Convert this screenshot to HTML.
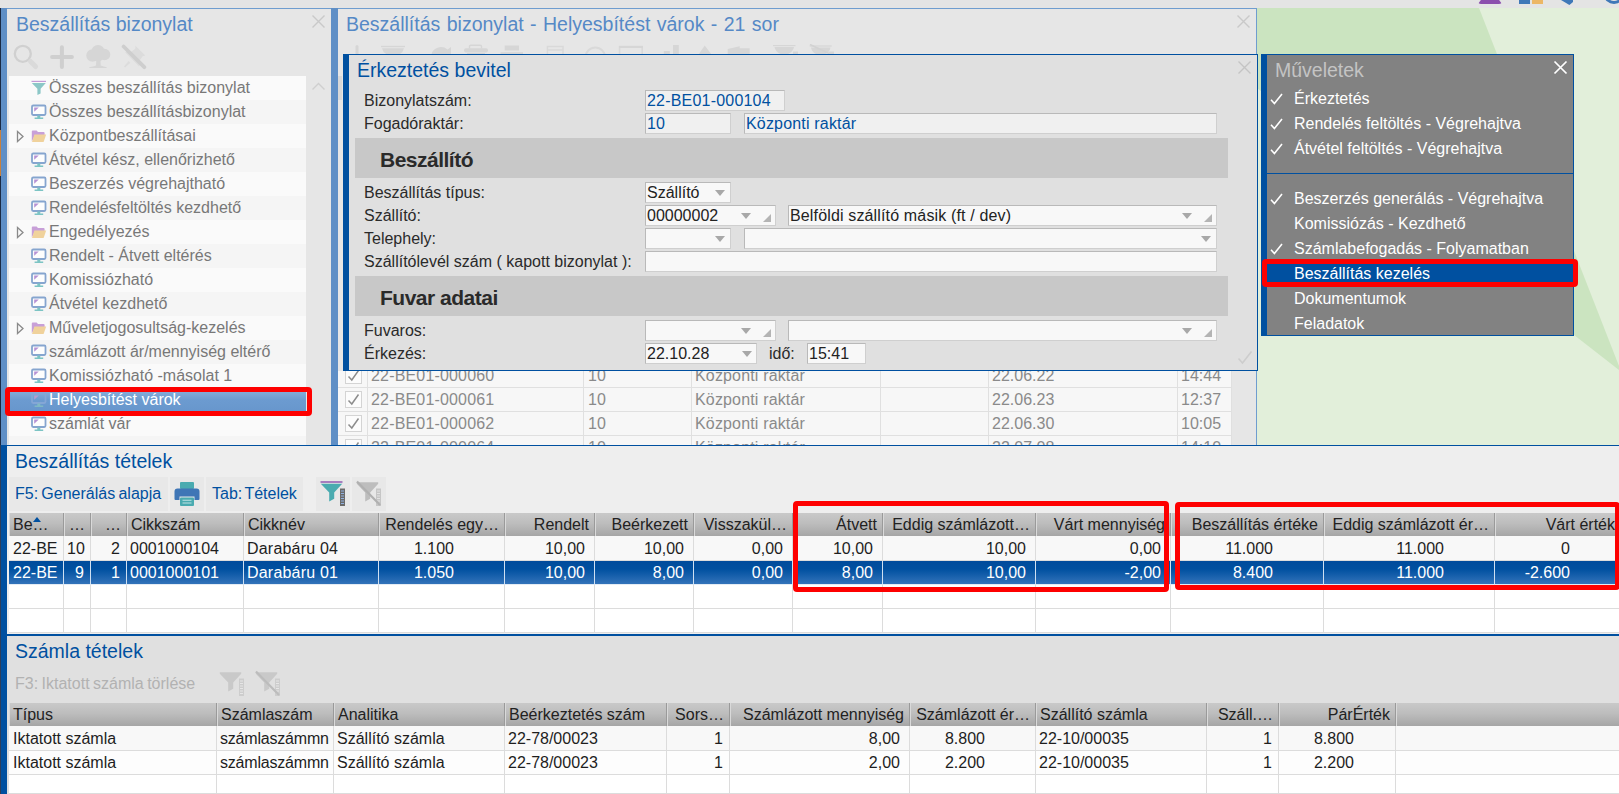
<!DOCTYPE html>
<html lang="hu"><head><meta charset="utf-8"><title>Beszállítás bizonylat</title>
<style>
*{box-sizing:border-box;margin:0;padding:0}
html,body{width:1619px;height:794px;overflow:hidden;background:#e4e4e4;font-family:"Liberation Sans",Arial,sans-serif;font-size:16px;color:#222}
.a{position:absolute}
.t{position:absolute;white-space:nowrap;line-height:20px;height:20px}
.h1{position:absolute;white-space:nowrap;font-size:19.5px;line-height:24px;color:#0050a0}
.fld{position:absolute;height:21px;border:1px solid #b9b9b9;border-bottom-color:#cfcfcf;border-right-color:#cfcfcf;background:#f8f8f8;line-height:19px;padding-left:1px;white-space:nowrap;overflow:hidden}
.fld.ro{background:#f0f0f0;color:#0050a0}
.sec{position:absolute;left:355px;width:873px;height:40px;background:#c8c8c8;font-weight:bold;font-size:21px;letter-spacing:-0.5px;line-height:43px;padding-left:25px;color:#2a2a2a}
.dd{position:absolute;width:0;height:0;border-left:5px solid transparent;border-right:5px solid transparent;border-top:6px solid #a8a8a8}
.rs{position:absolute;width:0;height:0;border-left:8px solid transparent;border-bottom:8px solid #b4b4b4}
.th{position:absolute;top:0;height:23px;line-height:23px;white-space:nowrap;overflow:hidden;color:#222;border-left:1px solid #d9d9d9;border-right:1px solid #9a9a9a;padding:0 5px 0 3px;background:linear-gradient(#c9c9c9,#bdbdbd 45%,#a6a6a6)}
.td{position:absolute;height:24px;line-height:23px;white-space:nowrap;overflow:hidden;padding:0 9px 0 3px;border-right:1px solid #dcdcdc;border-bottom:1px solid #dcdcdc}
.r{text-align:right}
.c{text-align:center}
.mi{position:absolute;left:1294px;color:#fff;white-space:nowrap;line-height:20px}
.ck{position:absolute;left:1270px;width:13px;height:12px}
</style></head><body>

<div class="a" style="left:0;top:0;width:1619px;height:8px;background:#e4e4e4"></div>
<div class="a" style="left:1478px;top:0;width:24px;height:4px;background:#8c4fae;border-radius:0 0 3px 3px;clip-path:polygon(12% 0,88% 0,100% 100%,0 100%)"></div>
<div class="a" style="left:1519px;top:0;width:11px;height:4px;background:#3f78b8"></div>
<div class="a" style="left:1532px;top:0;width:11px;height:4px;background:#ecb766"></div>
<div class="a" style="left:1561px;top:0;width:12px;height:5px;background:#3f78b8;clip-path:polygon(0 0,100% 0,100% 40%,70% 100%)"></div>
<div class="a" style="left:1604px;top:-14px;width:20px;height:18px;border:3px solid #3f78b8;border-radius:50%"></div>
<div class="a" style="left:1257px;top:8px;width:362px;height:437px;background:#e2efda"></div>
<svg class="a" style="left:1257px;top:8px" width="362" height="437" viewBox="1257 8 362 437"><polygon points="1257,8 1479,8 1619,366 1619,370 1257,88" fill="#cbe4c0"/></svg>
<div class="a" style="left:0;top:8px;width:331px;height:437px;background:#e6e6e6;border-top:1px solid #6f9dcf"></div>
<div class="a" style="left:0;top:8px;width:7px;height:437px;background:#5f8fc6"></div>
<div class="a" style="left:0;top:8px;width:1px;height:437px;background:#1a2a44"></div>
<div class="a" style="left:0;top:130px;width:1px;height:46px;background:#c8803c"></div>
<div class="h1" style="left:16px;top:12px;color:#5589c6">Beszállítás bizonylat</div>
<svg class="a" style="left:311px;top:14px" width="15" height="15" viewBox="0 0 15 15"><path d="M1.5 1.5 L13.5 13.5 M13.5 1.5 L1.5 13.5" stroke="#c9c9c9" stroke-width="1.4" fill="none"/></svg>
<svg class="a" style="left:12px;top:44px" width="140" height="27" viewBox="0 0 140 27" fill="none">
<circle cx="10.8" cy="9.8" r="8" stroke="#d0d0d0" stroke-width="2.3"/><path d="M18.500 17.500 L23.600 22.600" stroke="#dadada" stroke-width="5" stroke-linecap="round"/>
<path d="M49.900 3.200 V22.900 M40.100 13 H59.900" stroke="#cfcfcf" stroke-width="4" stroke-linecap="round"/>
<g fill="#d6d6d6"><circle cx="80.500" cy="11.500" r="6.200"/><circle cx="86" cy="7.800" r="6.800"/><circle cx="92.500" cy="10.500" r="5.800"/><circle cx="86" cy="12" r="5.500"/><path d="M84.400 15 h4 l0.300 6.500 q3 1.200 6 1.800 v0.800 h-17.500 v-0.800 q4 -0.500 6.800 -1.800z"/></g>
<g fill="#dcdcdc"><path d="M123.500 1.800 l9.800 9.800 -2.600 0.600 -3.200 4.400 1 4 -1.600 1.600 -13.600 -13.600 1.600 -1.600 4 1 4.400 -3.200z"/><path d="M116.600 17 l1.800 1.800 -5.400 4.600 -1 -1z"/></g>
<path d="M111.600 2.500 L132.300 23.200" stroke="#cecece" stroke-width="3.800" stroke-linecap="round"/>
</svg>
<div class="a" style="left:9px;top:76px;width:297px;height:369px;background:#fafafa"></div>
<div class="a" style="left:9px;top:76px;width:297px;height:24px;background:#fafafa"></div>
<svg class="a" style="left:31px;top:80px" width="16" height="16" viewBox="0 0 16 16"><path d="M0.5 1.4 h14.5" stroke="#c39ad6" stroke-width="1.2"/><path d="M0.8 3 h14 l-5.2 5.8 v4.6 l-3.2 1.6 v-6.2z" fill="#8cc7c7"/></svg>
<div class="t" style="left:49px;top:78px;color:#787878">Összes beszállítás bizonylat</div>
<div class="a" style="left:9px;top:100px;width:297px;height:24px;background:#f5f5f5"></div>
<svg class="a" style="left:31px;top:104px" width="16" height="16" viewBox="0 0 16 16"><rect x="1" y="1.5" width="13.5" height="9.5" rx="1.2" fill="#fdfdfd" stroke="#86a5cf" stroke-width="1.8"/><path d="M3.2 3.6 h4.6 l-4.6 4.2z" fill="#b692d4"/><path d="M6.3 11.5 h3 v2 h-3z M3.6 13.4 h8.6 v1.6 h-8.6z" fill="#7cc4c4"/></svg>
<div class="t" style="left:49px;top:102px;color:#787878">Összes beszállításbizonylat</div>
<div class="a" style="left:9px;top:124px;width:297px;height:24px;background:#fafafa"></div>
<svg class="a" style="left:16px;top:130px" width="9" height="13" viewBox="0 0 9 13"><path d="M1.5 1.5 L7 6.5 L1.5 11.5z" fill="none" stroke="#8a8a8a" stroke-width="1.3"/></svg>
<svg class="a" style="left:31px;top:128px" width="16" height="16" viewBox="0 0 16 16"><path d="M0.8 13.5 v-10 q0 -1 1 -1 h3.8 l1.4 1.6 h5.6 q1 0 1 1 v2 h-9.5 z" fill="#c8a0d8"/><path d="M3.4 6.6 h11.8 l-2.6 7.4 h-11.6z" fill="#f0d29c"/></svg>
<div class="t" style="left:49px;top:126px;color:#787878">Központbeszállításai</div>
<div class="a" style="left:9px;top:148px;width:297px;height:24px;background:#f5f5f5"></div>
<svg class="a" style="left:31px;top:152px" width="16" height="16" viewBox="0 0 16 16"><rect x="1" y="1.5" width="13.5" height="9.5" rx="1.2" fill="#fdfdfd" stroke="#86a5cf" stroke-width="1.8"/><path d="M3.2 3.6 h4.6 l-4.6 4.2z" fill="#b692d4"/><path d="M6.3 11.5 h3 v2 h-3z M3.6 13.4 h8.6 v1.6 h-8.6z" fill="#7cc4c4"/></svg>
<div class="t" style="left:49px;top:150px;color:#787878">Átvétel kész, ellenőrizhető</div>
<div class="a" style="left:9px;top:172px;width:297px;height:24px;background:#fafafa"></div>
<svg class="a" style="left:31px;top:176px" width="16" height="16" viewBox="0 0 16 16"><rect x="1" y="1.5" width="13.5" height="9.5" rx="1.2" fill="#fdfdfd" stroke="#86a5cf" stroke-width="1.8"/><path d="M3.2 3.6 h4.6 l-4.6 4.2z" fill="#b692d4"/><path d="M6.3 11.5 h3 v2 h-3z M3.6 13.4 h8.6 v1.6 h-8.6z" fill="#7cc4c4"/></svg>
<div class="t" style="left:49px;top:174px;color:#787878">Beszerzés végrehajtható</div>
<div class="a" style="left:9px;top:196px;width:297px;height:24px;background:#f5f5f5"></div>
<svg class="a" style="left:31px;top:200px" width="16" height="16" viewBox="0 0 16 16"><rect x="1" y="1.5" width="13.5" height="9.5" rx="1.2" fill="#fdfdfd" stroke="#86a5cf" stroke-width="1.8"/><path d="M3.2 3.6 h4.6 l-4.6 4.2z" fill="#b692d4"/><path d="M6.3 11.5 h3 v2 h-3z M3.6 13.4 h8.6 v1.6 h-8.6z" fill="#7cc4c4"/></svg>
<div class="t" style="left:49px;top:198px;color:#787878">Rendelésfeltöltés kezdhető</div>
<div class="a" style="left:9px;top:220px;width:297px;height:24px;background:#fafafa"></div>
<svg class="a" style="left:16px;top:226px" width="9" height="13" viewBox="0 0 9 13"><path d="M1.5 1.5 L7 6.5 L1.5 11.5z" fill="none" stroke="#8a8a8a" stroke-width="1.3"/></svg>
<svg class="a" style="left:31px;top:224px" width="16" height="16" viewBox="0 0 16 16"><path d="M0.8 13.5 v-10 q0 -1 1 -1 h3.8 l1.4 1.6 h5.6 q1 0 1 1 v2 h-9.5 z" fill="#c8a0d8"/><path d="M3.4 6.6 h11.8 l-2.6 7.4 h-11.6z" fill="#f0d29c"/></svg>
<div class="t" style="left:49px;top:222px;color:#787878">Engedélyezés</div>
<div class="a" style="left:9px;top:244px;width:297px;height:24px;background:#f5f5f5"></div>
<svg class="a" style="left:31px;top:248px" width="16" height="16" viewBox="0 0 16 16"><rect x="1" y="1.5" width="13.5" height="9.5" rx="1.2" fill="#fdfdfd" stroke="#86a5cf" stroke-width="1.8"/><path d="M3.2 3.6 h4.6 l-4.6 4.2z" fill="#b692d4"/><path d="M6.3 11.5 h3 v2 h-3z M3.6 13.4 h8.6 v1.6 h-8.6z" fill="#7cc4c4"/></svg>
<div class="t" style="left:49px;top:246px;color:#787878">Rendelt - Átvett eltérés</div>
<div class="a" style="left:9px;top:268px;width:297px;height:24px;background:#fafafa"></div>
<svg class="a" style="left:31px;top:272px" width="16" height="16" viewBox="0 0 16 16"><rect x="1" y="1.5" width="13.5" height="9.5" rx="1.2" fill="#fdfdfd" stroke="#86a5cf" stroke-width="1.8"/><path d="M3.2 3.6 h4.6 l-4.6 4.2z" fill="#b692d4"/><path d="M6.3 11.5 h3 v2 h-3z M3.6 13.4 h8.6 v1.6 h-8.6z" fill="#7cc4c4"/></svg>
<div class="t" style="left:49px;top:270px;color:#787878">Komissiózható</div>
<div class="a" style="left:9px;top:292px;width:297px;height:24px;background:#f5f5f5"></div>
<svg class="a" style="left:31px;top:296px" width="16" height="16" viewBox="0 0 16 16"><rect x="1" y="1.5" width="13.5" height="9.5" rx="1.2" fill="#fdfdfd" stroke="#86a5cf" stroke-width="1.8"/><path d="M3.2 3.6 h4.6 l-4.6 4.2z" fill="#b692d4"/><path d="M6.3 11.5 h3 v2 h-3z M3.6 13.4 h8.6 v1.6 h-8.6z" fill="#7cc4c4"/></svg>
<div class="t" style="left:49px;top:294px;color:#787878">Átvétel kezdhető</div>
<div class="a" style="left:9px;top:316px;width:297px;height:24px;background:#fafafa"></div>
<svg class="a" style="left:16px;top:322px" width="9" height="13" viewBox="0 0 9 13"><path d="M1.5 1.5 L7 6.5 L1.5 11.5z" fill="none" stroke="#8a8a8a" stroke-width="1.3"/></svg>
<svg class="a" style="left:31px;top:320px" width="16" height="16" viewBox="0 0 16 16"><path d="M0.8 13.5 v-10 q0 -1 1 -1 h3.8 l1.4 1.6 h5.6 q1 0 1 1 v2 h-9.5 z" fill="#c8a0d8"/><path d="M3.4 6.6 h11.8 l-2.6 7.4 h-11.6z" fill="#f0d29c"/></svg>
<div class="t" style="left:49px;top:318px;color:#787878">Műveletjogosultság-kezelés</div>
<div class="a" style="left:9px;top:340px;width:297px;height:24px;background:#f5f5f5"></div>
<svg class="a" style="left:31px;top:344px" width="16" height="16" viewBox="0 0 16 16"><rect x="1" y="1.5" width="13.5" height="9.5" rx="1.2" fill="#fdfdfd" stroke="#86a5cf" stroke-width="1.8"/><path d="M3.2 3.6 h4.6 l-4.6 4.2z" fill="#b692d4"/><path d="M6.3 11.5 h3 v2 h-3z M3.6 13.4 h8.6 v1.6 h-8.6z" fill="#7cc4c4"/></svg>
<div class="t" style="left:49px;top:342px;color:#787878">számlázott ár/mennyiség eltérő</div>
<div class="a" style="left:9px;top:364px;width:297px;height:24px;background:#fafafa"></div>
<svg class="a" style="left:31px;top:368px" width="16" height="16" viewBox="0 0 16 16"><rect x="1" y="1.5" width="13.5" height="9.5" rx="1.2" fill="#fdfdfd" stroke="#86a5cf" stroke-width="1.8"/><path d="M3.2 3.6 h4.6 l-4.6 4.2z" fill="#b692d4"/><path d="M6.3 11.5 h3 v2 h-3z M3.6 13.4 h8.6 v1.6 h-8.6z" fill="#7cc4c4"/></svg>
<div class="t" style="left:49px;top:366px;color:#787878">Komissiózható -másolat 1</div>
<div class="a" style="left:9px;top:388px;width:297px;height:24px;background:linear-gradient(#8fb3db,#6c9bd0 50%,#6796cc)"></div>
<svg class="a" style="left:31px;top:392px" width="16" height="16" viewBox="0 0 16 16"><rect x="1" y="1.5" width="13.5" height="9.5" rx="1.2" fill="none" stroke="#84a6d6" stroke-width="1.8"/><path d="M3.2 3.6 h4.6 l-4.6 4.2z" fill="#b79bd0"/><path d="M6.3 11.5 h3 v2 h-3z M3.6 13.4 h8.6 v1.6 h-8.6z" fill="#7fb8c4"/></svg>
<div class="t" style="left:49px;top:390px;color:#ffffff">Helyesbítést várok</div>
<div class="a" style="left:9px;top:412px;width:297px;height:24px;background:#fafafa"></div>
<svg class="a" style="left:31px;top:416px" width="16" height="16" viewBox="0 0 16 16"><rect x="1" y="1.5" width="13.5" height="9.5" rx="1.2" fill="#fdfdfd" stroke="#86a5cf" stroke-width="1.8"/><path d="M3.2 3.6 h4.6 l-4.6 4.2z" fill="#b692d4"/><path d="M6.3 11.5 h3 v2 h-3z M3.6 13.4 h8.6 v1.6 h-8.6z" fill="#7cc4c4"/></svg>
<div class="t" style="left:49px;top:414px;color:#787878">számlát vár</div>
<div class="a" style="left:9px;top:436px;width:297px;height:9px;background:#f5f5f5"></div>
<svg class="a" style="left:311px;top:82px" width="15" height="9" viewBox="0 0 15 9"><path d="M1.5 7.5 L7.5 1.5 L13.5 7.5" stroke="#cfcfcf" stroke-width="1.4" fill="none"/></svg>
<div class="a" style="left:5px;top:387px;width:307px;height:29px;border:5px solid #fe0000;border-radius:4px"></div>
<div class="a" style="left:331px;top:8px;width:926px;height:437px;background:#e6e6e6;border-top:1px solid #6f9dcf;border-right:1px solid #6f9dcf"></div>
<div class="a" style="left:331px;top:8px;width:7px;height:437px;background:#5f8fc6"></div>
<div class="h1" style="left:346px;top:12px;color:#5589c6;word-spacing:1px">Beszállítás bizonylat - Helyesbítést várok - 21 sor</div>
<svg class="a" style="left:1236px;top:14px" width="15" height="15" viewBox="0 0 15 15"><path d="M1.5 1.5 L13.5 13.5 M13.5 1.5 L1.5 13.5" stroke="#c9c9c9" stroke-width="1.4" fill="none"/></svg>
<svg class="a" style="left:338px;top:44px" width="520" height="10" viewBox="0 0 520 10" fill="#d6d6d6">
<rect x="17.5" y="1" width="3" height="11" rx="1.5"/>
<rect x="43" y="1.8" width="24" height="1.4"/><path d="M44 4.3 h22 q-1 5 -6 6.5 h-10 q-5 -1.5 -6 -6.5z"/>
<path d="M93.5 12 a9.5 8.5 0 0 1 16 -6.5 l3.5 -2.5 v9z"/>
<rect x="126" y="4.3" width="24" height="4.2" rx="2"/><path d="M131.5 4.5 v-2 q0 -1.3 1.3 -1.3 h9.4 q1.3 0 1.3 1.3 v2" fill="none" stroke="#d6d6d6" stroke-width="1.4"/><rect x="129" y="9" width="18" height="2"/>
<rect x="166.7" y="1.5" width="14.3" height="5"/><rect x="162.5" y="8.2" width="22.5" height="3"/>
<path d="M209.4 12 v-9.4 h15.6 v9.4 M209.4 6 h15.6" fill="none" stroke="#d9d9d9" stroke-width="1.5"/>
<path d="M247.7 13 a9.6 9.6 0 0 1 19.2 0" fill="none" stroke="#d9d9d9" stroke-width="2"/>
<path d="M281.6 12 v-9 h22.6 v9" fill="none" stroke="#d9d9d9" stroke-width="1.6"/><rect x="281" y="1.8" width="24" height="2.2"/>
<rect x="335" y="1" width="5.8" height="11"/><rect x="325.8" y="7" width="6" height="5"/>
<path d="M359.5 12 l7.2 -10.5 l8 10.5z"/>
<path d="M389.7 5 l12 -2.8 v2 h10 v8 h-22z"/>
<rect x="435" y="1" width="22.5" height="1.2"/><path d="M436.5 3 h19.5 q-1 5 -6 7 h-7.500 q-5 -2 -6 -7z"/><rect x="455" y="7.500" width="5" height="3"/>
<rect x="471.7" y="1.400" width="22" height="1.2"/><path d="M473 3.400 h19.5 q-1 5 -6 7 h-7.500 q-5 -2 -6 -7z"/><path d="M472 0.500 l20 9.500" stroke="#d2d2d2" stroke-width="1.600"/><rect x="491" y="7.500" width="5" height="3"/>
</svg>
<div class="a" style="left:338px;top:371px;width:893px;height:74px;background:#f7f7f7"></div>
<div class="a" style="left:338px;top:76px;width:4px;height:24px;background:#d8d8d8"></div>
<div class="a" style="left:367px;top:371px;width:1px;height:74px;background:#e0e0e0"></div>
<div class="a" style="left:583px;top:371px;width:1px;height:74px;background:#e0e0e0"></div>
<div class="a" style="left:691px;top:371px;width:1px;height:74px;background:#e0e0e0"></div>
<div class="a" style="left:880px;top:371px;width:1px;height:74px;background:#e0e0e0"></div>
<div class="a" style="left:988px;top:371px;width:1px;height:74px;background:#e0e0e0"></div>
<div class="a" style="left:1177px;top:371px;width:1px;height:74px;background:#e0e0e0"></div>
<div class="a" style="left:1231px;top:371px;width:1px;height:74px;background:#e0e0e0"></div>
<div class="a" style="left:338px;top:387px;width:893px;height:1px;background:#e0e0e0"></div>
<div class="a" style="left:338px;top:411px;width:893px;height:1px;background:#e0e0e0"></div>
<div class="a" style="left:338px;top:435px;width:893px;height:1px;background:#e0e0e0"></div>
<div class="a" style="left:338px;top:371px;width:919px;height:74px;overflow:hidden">
<svg class="a" style="left:7px;top:-4px" width="17" height="17" viewBox="0 0 17 17"><rect x="0.5" y="0.5" width="16" height="16" fill="#fcfcfc" stroke="#d4d4d4"/><path d="M3.5 9.5 L6.8 13 L13.5 3.5" fill="none" stroke="#8c8c8c" stroke-width="1.5"/></svg>
<div class="t" style="left:33px;top:-5px;color:#8a8a8a;letter-spacing:0.17px">22-BE01-000060</div>
<div class="t" style="left:250px;top:-5px;color:#8a8a8a">10</div>
<div class="t" style="left:357px;top:-5px;color:#8a8a8a;letter-spacing:0.16px">Központi raktár</div>
<div class="t" style="left:654px;top:-5px;color:#8a8a8a">22.06.22</div>
<div class="t" style="left:843px;top:-5px;color:#8a8a8a">14:44</div>
<svg class="a" style="left:7px;top:20px" width="17" height="17" viewBox="0 0 17 17"><rect x="0.5" y="0.5" width="16" height="16" fill="#fcfcfc" stroke="#d4d4d4"/><path d="M3.5 9.5 L6.8 13 L13.5 3.5" fill="none" stroke="#8c8c8c" stroke-width="1.5"/></svg>
<div class="t" style="left:33px;top:19px;color:#8a8a8a;letter-spacing:0.17px">22-BE01-000061</div>
<div class="t" style="left:250px;top:19px;color:#8a8a8a">10</div>
<div class="t" style="left:357px;top:19px;color:#8a8a8a;letter-spacing:0.16px">Központi raktár</div>
<div class="t" style="left:654px;top:19px;color:#8a8a8a">22.06.23</div>
<div class="t" style="left:843px;top:19px;color:#8a8a8a">12:37</div>
<svg class="a" style="left:7px;top:44px" width="17" height="17" viewBox="0 0 17 17"><rect x="0.5" y="0.5" width="16" height="16" fill="#fcfcfc" stroke="#d4d4d4"/><path d="M3.5 9.5 L6.8 13 L13.5 3.5" fill="none" stroke="#8c8c8c" stroke-width="1.5"/></svg>
<div class="t" style="left:33px;top:43px;color:#8a8a8a;letter-spacing:0.17px">22-BE01-000062</div>
<div class="t" style="left:250px;top:43px;color:#8a8a8a">10</div>
<div class="t" style="left:357px;top:43px;color:#8a8a8a;letter-spacing:0.16px">Központi raktár</div>
<div class="t" style="left:654px;top:43px;color:#8a8a8a">22.06.30</div>
<div class="t" style="left:843px;top:43px;color:#8a8a8a">10:05</div>
<svg class="a" style="left:7px;top:68px" width="17" height="17" viewBox="0 0 17 17"><rect x="0.5" y="0.5" width="16" height="16" fill="#fcfcfc" stroke="#d4d4d4"/><path d="M3.5 9.5 L6.8 13 L13.5 3.5" fill="none" stroke="#8c8c8c" stroke-width="1.5"/></svg>
<div class="t" style="left:33px;top:67px;color:#8a8a8a;letter-spacing:0.17px">22-BE01-000064</div>
<div class="t" style="left:250px;top:67px;color:#8a8a8a">10</div>
<div class="t" style="left:357px;top:67px;color:#8a8a8a;letter-spacing:0.16px">Központi raktár</div>
<div class="t" style="left:654px;top:67px;color:#8a8a8a">22.07.08</div>
<div class="t" style="left:843px;top:67px;color:#8a8a8a">14:10</div>
</div>
<div class="a" style="left:343px;top:54px;width:915px;height:317px;background:#e0e0e0;border:1px solid #0050a0;border-left:6px solid #0050a0"></div>
<div class="h1" style="left:357px;top:58px">Érkeztetés bevitel</div>
<svg class="a" style="left:1237px;top:60px" width="15" height="15" viewBox="0 0 15 15"><path d="M1.5 1.5 L13.5 13.5 M13.5 1.5 L1.5 13.5" stroke="#c4c4c4" stroke-width="1.4" fill="none"/></svg>
<svg class="a" style="left:1237px;top:350px" width="16" height="15" viewBox="0 0 16 15"><path d="M1.5 8.5 L5.5 13 L14.5 1.5" stroke="#cdcdcd" stroke-width="1.6" fill="none"/></svg>
<div class="t" style="left:364px;top:91px;color:#2a2a2a">Bizonylatszám:</div>
<div class="fld ro" style="left:645px;top:90px;width:140px;letter-spacing:0.2px">22-BE01-000104</div>
<div class="t" style="left:364px;top:114px;color:#2a2a2a">Fogadóraktár:</div>
<div class="fld ro" style="left:645px;top:113px;width:86px">10</div>
<div class="fld ro" style="left:744px;top:113px;width:473px;letter-spacing:0.18px">Központi raktár</div>
<div class="sec" style="top:138px">Beszállító</div>
<div class="t" style="left:364px;top:183px;color:#2a2a2a">Beszállítás típus:</div>
<div class="fld" style="left:645px;top:182px;width:86px">Szállító</div>
<div class="dd" style="left:715px;top:190px"></div>
<div class="t" style="left:364px;top:206px;color:#2a2a2a">Szállító:</div>
<div class="fld" style="left:645px;top:205px;width:131px">00000002</div>
<div class="dd" style="left:741px;top:213px"></div>
<div class="rs" style="left:763px;top:214px"></div>
<div class="fld" style="left:788px;top:205px;width:429px;letter-spacing:0.15px">Belföldi szállító másik (ft / dev)</div>
<div class="dd" style="left:1182px;top:213px"></div>
<div class="rs" style="left:1204px;top:214px"></div>
<div class="t" style="left:364px;top:229px;color:#2a2a2a">Telephely:</div>
<div class="fld" style="left:645px;top:228px;width:86px"></div>
<div class="dd" style="left:715px;top:236px"></div>
<div class="fld" style="left:744px;top:228px;width:473px"></div>
<div class="dd" style="left:1201px;top:236px"></div>
<div class="t" style="left:364px;top:252px;color:#2a2a2a">Szállítólevél szám ( kapott bizonylat ):</div>
<div class="fld" style="left:645px;top:251px;width:572px"></div>
<div class="sec" style="top:276px">Fuvar adatai</div>
<div class="t" style="left:364px;top:321px;color:#2a2a2a">Fuvaros:</div>
<div class="fld" style="left:645px;top:320px;width:131px"></div>
<div class="dd" style="left:741px;top:328px"></div>
<div class="rs" style="left:763px;top:329px"></div>
<div class="fld" style="left:788px;top:320px;width:429px"></div>
<div class="dd" style="left:1182px;top:328px"></div>
<div class="rs" style="left:1204px;top:329px"></div>
<div class="t" style="left:364px;top:344px;color:#2a2a2a">Érkezés:</div>
<div class="fld" style="left:645px;top:343px;width:112px">22.10.28</div>
<div class="dd" style="left:742px;top:351px"></div>
<div class="t" style="left:769px;top:344px;color:#2a2a2a">idő:</div>
<div class="fld" style="left:807px;top:343px;width:59px">15:41</div>
<div class="a" style="left:1261px;top:54px;width:313px;height:282px;background:#828282;border:1px solid #0050a0;border-left:6px solid #0050a0"></div>
<div class="h1" style="left:1275px;top:58px;color:#c4c4c4">Műveletek</div>
<svg class="a" style="left:1553px;top:60px" width="15" height="15" viewBox="0 0 15 15"><path d="M1.5 1.5 L13.5 13.5 M13.5 1.5 L1.5 13.5" stroke="#ffffff" stroke-width="1.7" fill="none"/></svg>
<div class="a" style="left:1267px;top:173px;width:306px;height:1px;background:#0050a0"></div>
<div class="a" style="left:1267px;top:264px;width:306px;height:19px;background:#0050a0"></div>
<div class="mi" style="top:89px">Érkeztetés</div>
<svg class="ck" style="top:93px" viewBox="0 0 13 12"><path d="M1 6.8 L4.4 10.6 L12 1" stroke="#fff" stroke-width="1.6" fill="none"/></svg>
<div class="mi" style="top:114px">Rendelés feltöltés - Végrehajtva</div>
<svg class="ck" style="top:118px" viewBox="0 0 13 12"><path d="M1 6.8 L4.4 10.6 L12 1" stroke="#fff" stroke-width="1.6" fill="none"/></svg>
<div class="mi" style="top:139px">Átvétel feltöltés - Végrehajtva</div>
<svg class="ck" style="top:143px" viewBox="0 0 13 12"><path d="M1 6.8 L4.4 10.6 L12 1" stroke="#fff" stroke-width="1.6" fill="none"/></svg>
<div class="mi" style="top:189px">Beszerzés generálás - Végrehajtva</div>
<svg class="ck" style="top:193px" viewBox="0 0 13 12"><path d="M1 6.8 L4.4 10.6 L12 1" stroke="#fff" stroke-width="1.6" fill="none"/></svg>
<div class="mi" style="top:214px">Komissiózás - Kezdhető</div>
<div class="mi" style="top:239px">Számlabefogadás - Folyamatban</div>
<svg class="ck" style="top:243px" viewBox="0 0 13 12"><path d="M1 6.8 L4.4 10.6 L12 1" stroke="#fff" stroke-width="1.6" fill="none"/></svg>
<div class="mi" style="top:264px">Beszállítás kezelés</div>
<div class="mi" style="top:289px">Dokumentumok</div>
<div class="mi" style="top:314px">Feladatok</div>
<div class="a" style="left:1262px;top:259px;width:316px;height:28px;border:5px solid #fe0000;border-radius:4px"></div>
<div class="a" style="left:0;top:445px;width:1619px;height:189px;background:#eeeeee;border-top:1px solid #0050a0"></div>
<div class="a" style="left:0;top:445px;width:7px;height:349px;background:#0050a0"></div>
<div class="a" style="left:0;top:445px;width:1px;height:349px;background:#2c3e5c"></div>
<div class="h1" style="left:15px;top:449px">Beszállítás tételek</div>
<div class="a" style="left:9px;top:477px;width:159px;height:34px;background:#e8e8e8"></div>
<div class="a" style="left:170px;top:477px;width:34px;height:34px;background:#e8e8e8"></div>
<div class="a" style="left:206px;top:477px;width:97px;height:34px;background:#e8e8e8"></div>
<div class="a" style="left:316px;top:477px;width:34px;height:34px;background:#e8e8e8"></div>
<div class="a" style="left:352px;top:477px;width:34px;height:34px;background:#e8e8e8"></div>
<div class="t" style="left:15px;top:484px;color:#0050a0;word-spacing:-1.2px">F5: Generálás alapja</div>
<div class="t" style="left:212px;top:484px;color:#0050a0;word-spacing:-2px">Tab: Tételek</div>
<svg class="a" style="left:174px;top:481px" width="26" height="26" viewBox="0 0 26 26"><rect x="6" y="1" width="14" height="7" rx="1" fill="#4aabb0"/><path d="M3.5 7.5 h19 q3 0 3 3 v7.5 q0 1 -1 1 h-4 v-3.5 h-15 v3.5 h-4 q-1 0 -1 -1 v-7.5 q0 -3 3 -3z" fill="#3f76b6"/><rect x="6" y="16.5" width="14" height="8.5" rx="1" fill="#4aabb0"/><path d="M8.5 19.3 h9 M8.5 22 h9" stroke="#bfe3e4" stroke-width="1.1"/></svg>
<svg class="a" style="left:319px;top:480px" width="28" height="28" viewBox="0 0 28 28"><path d="M1.5 2 h22" stroke="#8c4fae" stroke-width="1.4"/><path d="M1.8 3.8 h21.4 l-8 8.6 v6.4 l-5 2.6 v-9z" fill="#4aabb0"/><rect x="21" y="8.5" width="5" height="17.5" fill="#6a6a6a"/><path d="M22 11 h3 M22 13.5 h3 M22 16 h3 M22 18.5 h3 M22 21 h3 M22 23.5 h3" stroke="#8fb0e0" stroke-width="1.2"/></svg>
<svg class="a" style="left:355px;top:480px" width="28" height="28" viewBox="0 0 28 28"><path d="M1.8 2.2 h21.4 v1.6 l-8 8.6 v6.4 l-5 2.6 v-9 l-8.4 -8.6z" fill="#bdbdbd"/><rect x="21" y="8.5" width="5" height="17.5" fill="#c6c6c6"/><path d="M22 11 h3 M22 13.5 h3 M22 16 h3 M22 18.5 h3 M22 21 h3 M22 23.5 h3" stroke="#e2e2e2" stroke-width="1.2"/><path d="M2 1.5 L25 25" stroke="#b0b0b0" stroke-width="2.2"/></svg>
<div class="a" style="left:9px;top:513px;width:1610px;height:23px;background:linear-gradient(#c9c9c9,#bdbdbd 45%,#a6a6a6)"></div>
<div class="th " style="left:9px;top:513px;width:55px">Be…</div>
<div class="th r" style="left:64px;top:513px;width:27px">…</div>
<div class="th r" style="left:91px;top:513px;width:36px">…</div>
<div class="th " style="left:127px;top:513px;width:117px">Cikkszám</div>
<div class="th " style="left:244px;top:513px;width:135px">Cikknév</div>
<div class="th r" style="left:379px;top:513px;width:126px">Rendelés egy…</div>
<div class="th r" style="left:505px;top:513px;width:90px">Rendelt</div>
<div class="th r" style="left:595px;top:513px;width:99px">Beérkezett</div>
<div class="th r" style="left:694px;top:513px;width:99px">Visszakül…</div>
<div class="th r" style="left:793px;top:513px;width:90px">Átvett</div>
<div class="th r" style="left:883px;top:513px;width:153px">Eddig számlázott…</div>
<div class="th r" style="left:1036px;top:513px;width:135px">Várt mennyiség</div>
<div class="th r" style="left:1171px;top:513px;width:153px">Beszállítás értéke</div>
<div class="th r" style="left:1324px;top:513px;width:171px">Eddig számlázott ér…</div>
<div class="th r" style="left:1495px;top:513px;width:126px">Várt érték</div>
<div class="a" style="left:9px;top:536px;width:1610px;height:25px;background:#f8f8f8;border-bottom:1px solid #dcdcdc"></div>
<div class="td " style="left:9px;top:536px;width:55px;height:25px;padding-top:1px;color:#1e1e1e;border-right-color:#dcdcdc;border-bottom-color:#dcdcdc;padding-left:4px">22-BE</div>
<div class="td r" style="left:64px;top:536px;width:27px;height:25px;padding-top:1px;color:#1e1e1e;border-right-color:#dcdcdc;border-bottom-color:#dcdcdc"><span style="display:block;margin-right:-3px">10</span></div>
<div class="td r" style="left:91px;top:536px;width:36px;height:25px;padding-top:1px;color:#1e1e1e;border-right-color:#dcdcdc;border-bottom-color:#dcdcdc"><span style="display:block;margin-right:-3px">2</span></div>
<div class="td " style="left:127px;top:536px;width:117px;height:25px;padding-top:1px;color:#1e1e1e;border-right-color:#dcdcdc;border-bottom-color:#dcdcdc">0001000104</div>
<div class="td " style="left:244px;top:536px;width:135px;height:25px;padding-top:1px;color:#1e1e1e;border-right-color:#dcdcdc;border-bottom-color:#dcdcdc"><span style="letter-spacing:.2px">Darabáru 04</span></div>
<div class="td " style="left:379px;top:536px;width:126px;height:25px;padding-top:1px;color:#1e1e1e;border-right-color:#dcdcdc;border-bottom-color:#dcdcdc"><span style="display:block;text-align:right;padding-right:41px">1.100</span></div>
<div class="td r" style="left:505px;top:536px;width:90px;height:25px;padding-top:1px;color:#1e1e1e;border-right-color:#dcdcdc;border-bottom-color:#dcdcdc">10,00</div>
<div class="td r" style="left:595px;top:536px;width:99px;height:25px;padding-top:1px;color:#1e1e1e;border-right-color:#dcdcdc;border-bottom-color:#dcdcdc">10,00</div>
<div class="td r" style="left:694px;top:536px;width:99px;height:25px;padding-top:1px;color:#1e1e1e;border-right-color:#dcdcdc;border-bottom-color:#dcdcdc">0,00</div>
<div class="td r" style="left:793px;top:536px;width:90px;height:25px;padding-top:1px;color:#1e1e1e;border-right-color:#dcdcdc;border-bottom-color:#dcdcdc">10,00</div>
<div class="td r" style="left:883px;top:536px;width:153px;height:25px;padding-top:1px;color:#1e1e1e;border-right-color:#dcdcdc;border-bottom-color:#dcdcdc">10,00</div>
<div class="td r" style="left:1036px;top:536px;width:135px;height:25px;padding-top:1px;color:#1e1e1e;border-right-color:#dcdcdc;border-bottom-color:#dcdcdc">0,00</div>
<div class="td " style="left:1171px;top:536px;width:153px;height:25px;padding-top:1px;color:#1e1e1e;border-right-color:#dcdcdc;border-bottom-color:#dcdcdc"><span style="display:block;text-align:right;padding-right:41px">11.000</span></div>
<div class="td " style="left:1324px;top:536px;width:171px;height:25px;padding-top:1px;color:#1e1e1e;border-right-color:#dcdcdc;border-bottom-color:#dcdcdc"><span style="display:block;text-align:right;padding-right:41px">11.000</span></div>
<div class="td " style="left:1495px;top:536px;width:126px;height:25px;padding-top:1px;color:#1e1e1e;border-right-color:#dcdcdc;border-bottom-color:#dcdcdc"><span style="display:block;text-align:right;padding-right:41px">0</span></div>
<div class="a" style="left:9px;top:561px;width:1610px;height:24px;background:linear-gradient(#004b9c,#0050a0 35%,#3373ba);border-bottom:1px solid #dcdcdc"></div>
<div class="td " style="left:9px;top:561px;width:55px;height:24px;color:#fff;border-right-color:#cfe0f2;border-bottom-color:#e4ecf5;padding-left:4px">22-BE</div>
<div class="td r" style="left:64px;top:561px;width:27px;height:24px;color:#fff;border-right-color:#cfe0f2;border-bottom-color:#e4ecf5"><span style="display:block;margin-right:-3px">9</span></div>
<div class="td r" style="left:91px;top:561px;width:36px;height:24px;color:#fff;border-right-color:#cfe0f2;border-bottom-color:#e4ecf5"><span style="display:block;margin-right:-3px">1</span></div>
<div class="td " style="left:127px;top:561px;width:117px;height:24px;color:#fff;border-right-color:#cfe0f2;border-bottom-color:#e4ecf5">0001000101</div>
<div class="td " style="left:244px;top:561px;width:135px;height:24px;color:#fff;border-right-color:#cfe0f2;border-bottom-color:#e4ecf5"><span style="letter-spacing:.2px">Darabáru 01</span></div>
<div class="td " style="left:379px;top:561px;width:126px;height:24px;color:#fff;border-right-color:#cfe0f2;border-bottom-color:#e4ecf5"><span style="display:block;text-align:right;padding-right:41px">1.050</span></div>
<div class="td r" style="left:505px;top:561px;width:90px;height:24px;color:#fff;border-right-color:#cfe0f2;border-bottom-color:#e4ecf5">10,00</div>
<div class="td r" style="left:595px;top:561px;width:99px;height:24px;color:#fff;border-right-color:#cfe0f2;border-bottom-color:#e4ecf5">8,00</div>
<div class="td r" style="left:694px;top:561px;width:99px;height:24px;color:#fff;border-right-color:#cfe0f2;border-bottom-color:#e4ecf5">0,00</div>
<div class="td r" style="left:793px;top:561px;width:90px;height:24px;color:#fff;border-right-color:#cfe0f2;border-bottom-color:#e4ecf5">8,00</div>
<div class="td r" style="left:883px;top:561px;width:153px;height:24px;color:#fff;border-right-color:#cfe0f2;border-bottom-color:#e4ecf5">10,00</div>
<div class="td r" style="left:1036px;top:561px;width:135px;height:24px;color:#fff;border-right-color:#cfe0f2;border-bottom-color:#e4ecf5">-2,00</div>
<div class="td " style="left:1171px;top:561px;width:153px;height:24px;color:#fff;border-right-color:#cfe0f2;border-bottom-color:#e4ecf5"><span style="display:block;text-align:right;padding-right:41px">8.400</span></div>
<div class="td " style="left:1324px;top:561px;width:171px;height:24px;color:#fff;border-right-color:#cfe0f2;border-bottom-color:#e4ecf5"><span style="display:block;text-align:right;padding-right:41px">11.000</span></div>
<div class="td " style="left:1495px;top:561px;width:126px;height:24px;color:#fff;border-right-color:#cfe0f2;border-bottom-color:#e4ecf5"><span style="display:block;text-align:right;padding-right:41px">-2.600</span></div>
<div class="a" style="left:9px;top:585px;width:1610px;height:24px;background:#ffffff;border-bottom:1px solid #dcdcdc"></div>
<div class="td " style="left:9px;top:585px;width:55px;height:24px;color:#1e1e1e;border-right-color:#dcdcdc;border-bottom-color:#dcdcdc;padding-left:4px"></div>
<div class="td " style="left:64px;top:585px;width:27px;height:24px;color:#1e1e1e;border-right-color:#dcdcdc;border-bottom-color:#dcdcdc"></div>
<div class="td " style="left:91px;top:585px;width:36px;height:24px;color:#1e1e1e;border-right-color:#dcdcdc;border-bottom-color:#dcdcdc"></div>
<div class="td " style="left:127px;top:585px;width:117px;height:24px;color:#1e1e1e;border-right-color:#dcdcdc;border-bottom-color:#dcdcdc"></div>
<div class="td " style="left:244px;top:585px;width:135px;height:24px;color:#1e1e1e;border-right-color:#dcdcdc;border-bottom-color:#dcdcdc"></div>
<div class="td " style="left:379px;top:585px;width:126px;height:24px;color:#1e1e1e;border-right-color:#dcdcdc;border-bottom-color:#dcdcdc"></div>
<div class="td " style="left:505px;top:585px;width:90px;height:24px;color:#1e1e1e;border-right-color:#dcdcdc;border-bottom-color:#dcdcdc"></div>
<div class="td " style="left:595px;top:585px;width:99px;height:24px;color:#1e1e1e;border-right-color:#dcdcdc;border-bottom-color:#dcdcdc"></div>
<div class="td " style="left:694px;top:585px;width:99px;height:24px;color:#1e1e1e;border-right-color:#dcdcdc;border-bottom-color:#dcdcdc"></div>
<div class="td " style="left:793px;top:585px;width:90px;height:24px;color:#1e1e1e;border-right-color:#dcdcdc;border-bottom-color:#dcdcdc"></div>
<div class="td " style="left:883px;top:585px;width:153px;height:24px;color:#1e1e1e;border-right-color:#dcdcdc;border-bottom-color:#dcdcdc"></div>
<div class="td " style="left:1036px;top:585px;width:135px;height:24px;color:#1e1e1e;border-right-color:#dcdcdc;border-bottom-color:#dcdcdc"></div>
<div class="td " style="left:1171px;top:585px;width:153px;height:24px;color:#1e1e1e;border-right-color:#dcdcdc;border-bottom-color:#dcdcdc"></div>
<div class="td " style="left:1324px;top:585px;width:171px;height:24px;color:#1e1e1e;border-right-color:#dcdcdc;border-bottom-color:#dcdcdc"></div>
<div class="td " style="left:1495px;top:585px;width:126px;height:24px;color:#1e1e1e;border-right-color:#dcdcdc;border-bottom-color:#dcdcdc"></div>
<div class="a" style="left:9px;top:609px;width:1610px;height:24px;background:#ffffff;border-bottom:1px solid #dcdcdc"></div>
<div class="td " style="left:9px;top:609px;width:55px;height:24px;color:#1e1e1e;border-right-color:#dcdcdc;border-bottom-color:#dcdcdc;padding-left:4px"></div>
<div class="td " style="left:64px;top:609px;width:27px;height:24px;color:#1e1e1e;border-right-color:#dcdcdc;border-bottom-color:#dcdcdc"></div>
<div class="td " style="left:91px;top:609px;width:36px;height:24px;color:#1e1e1e;border-right-color:#dcdcdc;border-bottom-color:#dcdcdc"></div>
<div class="td " style="left:127px;top:609px;width:117px;height:24px;color:#1e1e1e;border-right-color:#dcdcdc;border-bottom-color:#dcdcdc"></div>
<div class="td " style="left:244px;top:609px;width:135px;height:24px;color:#1e1e1e;border-right-color:#dcdcdc;border-bottom-color:#dcdcdc"></div>
<div class="td " style="left:379px;top:609px;width:126px;height:24px;color:#1e1e1e;border-right-color:#dcdcdc;border-bottom-color:#dcdcdc"></div>
<div class="td " style="left:505px;top:609px;width:90px;height:24px;color:#1e1e1e;border-right-color:#dcdcdc;border-bottom-color:#dcdcdc"></div>
<div class="td " style="left:595px;top:609px;width:99px;height:24px;color:#1e1e1e;border-right-color:#dcdcdc;border-bottom-color:#dcdcdc"></div>
<div class="td " style="left:694px;top:609px;width:99px;height:24px;color:#1e1e1e;border-right-color:#dcdcdc;border-bottom-color:#dcdcdc"></div>
<div class="td " style="left:793px;top:609px;width:90px;height:24px;color:#1e1e1e;border-right-color:#dcdcdc;border-bottom-color:#dcdcdc"></div>
<div class="td " style="left:883px;top:609px;width:153px;height:24px;color:#1e1e1e;border-right-color:#dcdcdc;border-bottom-color:#dcdcdc"></div>
<div class="td " style="left:1036px;top:609px;width:135px;height:24px;color:#1e1e1e;border-right-color:#dcdcdc;border-bottom-color:#dcdcdc"></div>
<div class="td " style="left:1171px;top:609px;width:153px;height:24px;color:#1e1e1e;border-right-color:#dcdcdc;border-bottom-color:#dcdcdc"></div>
<div class="td " style="left:1324px;top:609px;width:171px;height:24px;color:#1e1e1e;border-right-color:#dcdcdc;border-bottom-color:#dcdcdc"></div>
<div class="td " style="left:1495px;top:609px;width:126px;height:24px;color:#1e1e1e;border-right-color:#dcdcdc;border-bottom-color:#dcdcdc"></div>
<div class="a" style="left:33px;top:517px;width:0;height:0;border-left:4px solid transparent;border-right:4px solid transparent;border-bottom:5px solid #0050a0"></div>
<div class="a" style="left:793px;top:501px;width:376px;height:91px;border:5px solid #fe0000;border-radius:4px"></div>
<div class="a" style="left:1175px;top:502px;width:445px;height:88px;border:5px solid #fe0000;border-radius:4px"></div>
<div class="a" style="left:7px;top:634px;width:1612px;height:160px;background:#e0e0e0;border-top:2px solid #0050a0"></div>
<div class="h1" style="left:15px;top:639px">Számla tételek</div>
<div class="t" style="left:15px;top:674px;color:#b2b2b2;word-spacing:-1px">F3: Iktatott számla törlése</div>
<svg class="a" style="left:218px;top:670px" width="28" height="28" viewBox="0 0 28 28"><path d="M1.8 2.2 h21.4 v1.6 l-8 8.6 v6.4 l-5 2.6 v-9 l-8.4 -8.6z" fill="#c9c9c9"/><rect x="21" y="8.5" width="5" height="17.5" fill="#cdcdcd"/><path d="M22 11 h3 M22 13.5 h3 M22 16 h3 M22 18.5 h3 M22 21 h3 M22 23.5 h3" stroke="#e6e6e6" stroke-width="1.2"/></svg>
<svg class="a" style="left:254px;top:670px" width="28" height="28" viewBox="0 0 28 28"><path d="M1.8 2.2 h21.4 v1.6 l-8 8.6 v6.4 l-5 2.6 v-9 l-8.4 -8.6z" fill="#c9c9c9"/><rect x="21" y="8.5" width="5" height="17.5" fill="#cdcdcd"/><path d="M22 11 h3 M22 13.5 h3 M22 16 h3 M22 18.5 h3 M22 21 h3 M22 23.5 h3" stroke="#e6e6e6" stroke-width="1.2"/><path d="M2 1.5 L25 25" stroke="#bcbcbc" stroke-width="2.2"/></svg>
<div class="a" style="left:9px;top:703px;width:1610px;height:23px;background:linear-gradient(#c9c9c9,#bdbdbd 45%,#a6a6a6)"></div>
<div class="th " style="left:9px;top:703px;width:208px">Típus</div>
<div class="th " style="left:217px;top:703px;width:117px">Számlaszám</div>
<div class="th " style="left:334px;top:703px;width:171px">Analitika</div>
<div class="th " style="left:505px;top:703px;width:162px">Beérkeztetés szám</div>
<div class="th r" style="left:667px;top:703px;width:63px">Sors…</div>
<div class="th r" style="left:730px;top:703px;width:180px">Számlázott mennyiség</div>
<div class="th r" style="left:910px;top:703px;width:126px">Számlázott ér…</div>
<div class="th " style="left:1036px;top:703px;width:171px">Szállító számla</div>
<div class="th r" style="left:1207px;top:703px;width:72px">Száll.…</div>
<div class="th r" style="left:1279px;top:703px;width:117px">PárÉrték</div>
<div class="th " style="left:1396px;top:703px;width:244px"></div>
<div class="a" style="left:9px;top:726px;width:1610px;height:25px;background:#f8f8f8;border-bottom:1px solid #dcdcdc"></div>
<div class="td " style="left:9px;top:726px;width:208px;height:25px;padding-top:1px;color:#1e1e1e;border-right-color:#dcdcdc;border-bottom-color:#dcdcdc;padding-left:4px">Iktatott számla</div>
<div class="td " style="left:217px;top:726px;width:117px;height:25px;padding-top:1px;color:#1e1e1e;border-right-color:#dcdcdc;border-bottom-color:#dcdcdc"><span style="letter-spacing:-0.2px">számlaszámmn</span></div>
<div class="td " style="left:334px;top:726px;width:171px;height:25px;padding-top:1px;color:#1e1e1e;border-right-color:#dcdcdc;border-bottom-color:#dcdcdc">Szállító számla</div>
<div class="td " style="left:505px;top:726px;width:162px;height:25px;padding-top:1px;color:#1e1e1e;border-right-color:#dcdcdc;border-bottom-color:#dcdcdc">22-78/00023</div>
<div class="td r" style="left:667px;top:726px;width:63px;height:25px;padding-top:1px;color:#1e1e1e;border-right-color:#dcdcdc;border-bottom-color:#dcdcdc"><span style="display:block;margin-right:-3px">1</span></div>
<div class="td r" style="left:730px;top:726px;width:180px;height:25px;padding-top:1px;color:#1e1e1e;border-right-color:#dcdcdc;border-bottom-color:#dcdcdc">8,00</div>
<div class="td " style="left:910px;top:726px;width:126px;height:25px;padding-top:1px;color:#1e1e1e;border-right-color:#dcdcdc;border-bottom-color:#dcdcdc"><span style="display:block;text-align:right;padding-right:41px">8.800</span></div>
<div class="td " style="left:1036px;top:726px;width:171px;height:25px;padding-top:1px;color:#1e1e1e;border-right-color:#dcdcdc;border-bottom-color:#dcdcdc">22-10/00035</div>
<div class="td r" style="left:1207px;top:726px;width:72px;height:25px;padding-top:1px;color:#1e1e1e;border-right-color:#dcdcdc;border-bottom-color:#dcdcdc"><span style="display:block;margin-right:-3px">1</span></div>
<div class="td " style="left:1279px;top:726px;width:117px;height:25px;padding-top:1px;color:#1e1e1e;border-right-color:#dcdcdc;border-bottom-color:#dcdcdc"><span style="display:block;text-align:right;padding-right:32px">8.800</span></div>
<div class="td " style="left:1396px;top:726px;width:244px;height:25px;padding-top:1px;color:#1e1e1e;border-right-color:#dcdcdc;border-bottom-color:#dcdcdc"></div>
<div class="a" style="left:9px;top:751px;width:1610px;height:24px;background:#fdfdfd;border-bottom:1px solid #dcdcdc"></div>
<div class="td " style="left:9px;top:751px;width:208px;height:24px;color:#1e1e1e;border-right-color:#dcdcdc;border-bottom-color:#dcdcdc;padding-left:4px">Iktatott számla</div>
<div class="td " style="left:217px;top:751px;width:117px;height:24px;color:#1e1e1e;border-right-color:#dcdcdc;border-bottom-color:#dcdcdc"><span style="letter-spacing:-0.2px">számlaszámmn</span></div>
<div class="td " style="left:334px;top:751px;width:171px;height:24px;color:#1e1e1e;border-right-color:#dcdcdc;border-bottom-color:#dcdcdc">Szállító számla</div>
<div class="td " style="left:505px;top:751px;width:162px;height:24px;color:#1e1e1e;border-right-color:#dcdcdc;border-bottom-color:#dcdcdc">22-78/00023</div>
<div class="td r" style="left:667px;top:751px;width:63px;height:24px;color:#1e1e1e;border-right-color:#dcdcdc;border-bottom-color:#dcdcdc"><span style="display:block;margin-right:-3px">1</span></div>
<div class="td r" style="left:730px;top:751px;width:180px;height:24px;color:#1e1e1e;border-right-color:#dcdcdc;border-bottom-color:#dcdcdc">2,00</div>
<div class="td " style="left:910px;top:751px;width:126px;height:24px;color:#1e1e1e;border-right-color:#dcdcdc;border-bottom-color:#dcdcdc"><span style="display:block;text-align:right;padding-right:41px">2.200</span></div>
<div class="td " style="left:1036px;top:751px;width:171px;height:24px;color:#1e1e1e;border-right-color:#dcdcdc;border-bottom-color:#dcdcdc">22-10/00035</div>
<div class="td r" style="left:1207px;top:751px;width:72px;height:24px;color:#1e1e1e;border-right-color:#dcdcdc;border-bottom-color:#dcdcdc"><span style="display:block;margin-right:-3px">1</span></div>
<div class="td " style="left:1279px;top:751px;width:117px;height:24px;color:#1e1e1e;border-right-color:#dcdcdc;border-bottom-color:#dcdcdc"><span style="display:block;text-align:right;padding-right:32px">2.200</span></div>
<div class="td " style="left:1396px;top:751px;width:244px;height:24px;color:#1e1e1e;border-right-color:#dcdcdc;border-bottom-color:#dcdcdc"></div>
<div class="a" style="left:9px;top:775px;width:1610px;height:19px;background:#ffffff;border-bottom:1px solid #dcdcdc"></div>
<div class="td " style="left:9px;top:775px;width:208px;height:19px;color:#1e1e1e;border-right-color:#dcdcdc;border-bottom-color:#dcdcdc;padding-left:4px"></div>
<div class="td " style="left:217px;top:775px;width:117px;height:19px;color:#1e1e1e;border-right-color:#dcdcdc;border-bottom-color:#dcdcdc"></div>
<div class="td " style="left:334px;top:775px;width:171px;height:19px;color:#1e1e1e;border-right-color:#dcdcdc;border-bottom-color:#dcdcdc"></div>
<div class="td " style="left:505px;top:775px;width:162px;height:19px;color:#1e1e1e;border-right-color:#dcdcdc;border-bottom-color:#dcdcdc"></div>
<div class="td " style="left:667px;top:775px;width:63px;height:19px;color:#1e1e1e;border-right-color:#dcdcdc;border-bottom-color:#dcdcdc"></div>
<div class="td " style="left:730px;top:775px;width:180px;height:19px;color:#1e1e1e;border-right-color:#dcdcdc;border-bottom-color:#dcdcdc"></div>
<div class="td " style="left:910px;top:775px;width:126px;height:19px;color:#1e1e1e;border-right-color:#dcdcdc;border-bottom-color:#dcdcdc"></div>
<div class="td " style="left:1036px;top:775px;width:171px;height:19px;color:#1e1e1e;border-right-color:#dcdcdc;border-bottom-color:#dcdcdc"></div>
<div class="td " style="left:1207px;top:775px;width:72px;height:19px;color:#1e1e1e;border-right-color:#dcdcdc;border-bottom-color:#dcdcdc"></div>
<div class="td " style="left:1279px;top:775px;width:117px;height:19px;color:#1e1e1e;border-right-color:#dcdcdc;border-bottom-color:#dcdcdc"></div>
<div class="td " style="left:1396px;top:775px;width:244px;height:19px;color:#1e1e1e;border-right-color:#dcdcdc;border-bottom-color:#dcdcdc"></div>
</body></html>
